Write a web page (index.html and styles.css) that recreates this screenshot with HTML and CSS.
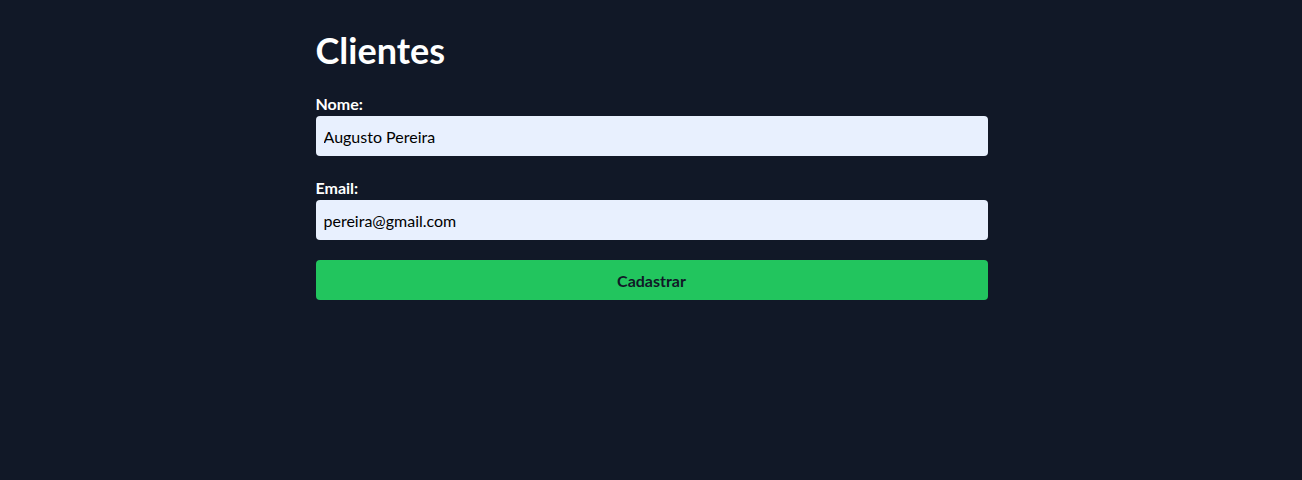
FILE: index.html
```html
<!DOCTYPE html>
<html lang="pt-BR">
<head>
<meta charset="utf-8">
<title>Clientes</title>
<link rel="stylesheet" href="styles.css">
</head>
<body>
<main class="container">
  <h1 class="title">Clientes</h1>
  <form class="form">
    <div class="field">
      <label class="label" for="nome">Nome:</label>
      <input class="input" id="nome" type="text" value="Augusto Pereira">
    </div>
    <div class="field">
      <label class="label" for="email">Email:</label>
      <input class="input" id="email" type="email" value="pereira@gmail.com">
    </div>
    <button class="button" type="button">Cadastrar</button>
  </form>
</main>
</body>
</html>
```
FILE: styles.css
```css
html, body {
  margin: 0;
  padding: 0;
  background: #111827;
  font-family: "Lato", "Noto Sans", sans-serif;
}
body {
  padding-left: 1px;
  min-height: 480px;
}
.container {
  width: 672px;
  margin: 0 auto;
  padding-top: 26px;
}
.title {
  margin: 0 0 20px;
  font-size: 36px;
  line-height: 48px;
  font-weight: 700;
  color: #ffffff;
}
.form {
  display: flex;
  flex-direction: column;
  gap: 20px;
}
.field {
  display: flex;
  flex-direction: column;
  gap: 2px;
}
.field + .field {
  margin-top: 2px;
}
.label {
  font-size: 16px;
  line-height: 20px;
  font-weight: 700;
  color: #ffffff;
}
.input {
  box-sizing: border-box;
  width: 100%;
  height: 40px;
  padding: 0 8px;
  border: none;
  border-radius: 4px;
  background: #e8f0fe;
  color: #000000;
  font-family: inherit;
  font-size: 16px;
  outline: none;
}
.button {
  height: 40px;
  border: none;
  border-radius: 4px;
  background: #22c55e;
  color: #111827;
  font-family: inherit;
  font-size: 16px;
  font-weight: 700;
}
```
